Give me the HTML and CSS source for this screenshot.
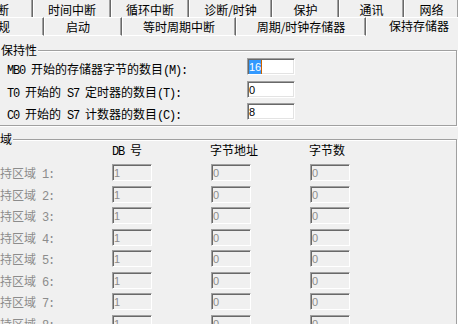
FILE: index.html
```html
<!DOCTYPE html>
<html lang="zh-CN">
<head>
<meta charset="utf-8">
<title>属性 - CPU</title>
<link rel="stylesheet" href="styles.css">
</head>
<body>
<div class="win">
  <div class="tabs">
    <div class="tabrow r1">
      <div class="tab t0">中断</div>
      <div class="tab t1">时间中断</div>
      <div class="tab t2">循环中断</div>
      <div class="tab t3">诊断/时钟</div>
      <div class="tab t4">保护</div>
      <div class="tab t5">通讯</div>
      <div class="tab t6">网络</div>
    </div>
    <div class="tabrow r2">
      <div class="tab u0">常规</div>
      <div class="tab u1">启动</div>
      <div class="tab u2">等时周期中断</div>
      <div class="tab u3">周期/时钟存储器</div>
      <div class="tab u4 active">保持存储器</div>
    </div>
  </div>
  <div class="panel">
    <div class="group g1">
      <div class="gtitle">保持性</div>
      <div class="form1">
        <div class="lbl"><span class="en">MB0 </span>开始的存储器字节的数目<span class="en">(M):</span></div>
        <div class="field"><span class="sel">16</span><span class="caret"></span></div>
        <div class="lbl"><span class="en">T0 </span>开始的<span class="en"> S7 </span>定时器的数目<span class="en">(T):</span></div>
        <div class="field">0</div>
        <div class="lbl"><span class="en">C0 </span>开始的<span class="en"> S7 </span>计数器的数目<span class="en">(C):</span></div>
        <div class="field">8</div>
      </div>
    </div>
    <div class="group g2">
      <div class="gtitle">保持区域</div>
      <div class="colhead">
        <div></div>
        <div><span class="en">DB </span>号</div>
        <div class="ch">字节地址</div>
        <div class="ch">字节数</div>
      </div>
      <div class="form2">
        <div class="lbl">保持区域<span class="en"> 1:</span></div>
        <div class="field">1</div><div class="field">0</div><div class="field">0</div>
        <div class="lbl">保持区域<span class="en"> 2:</span></div>
        <div class="field">1</div><div class="field">0</div><div class="field">0</div>
        <div class="lbl">保持区域<span class="en"> 3:</span></div>
        <div class="field">1</div><div class="field">0</div><div class="field">0</div>
        <div class="lbl">保持区域<span class="en"> 4:</span></div>
        <div class="field">1</div><div class="field">0</div><div class="field">0</div>
        <div class="lbl">保持区域<span class="en"> 5:</span></div>
        <div class="field">1</div><div class="field">0</div><div class="field">0</div>
        <div class="lbl">保持区域<span class="en"> 6:</span></div>
        <div class="field">1</div><div class="field">0</div><div class="field">0</div>
        <div class="lbl">保持区域<span class="en"> 7:</span></div>
        <div class="field">1</div><div class="field">0</div><div class="field">0</div>
        <div class="lbl">保持区域<span class="en"> 8:</span></div>
        <div class="field">1</div><div class="field">0</div><div class="field">0</div>
      </div>
    </div>
  </div>
</div>
</body>
</html>
```
FILE: styles.css
```css
* { box-sizing: border-box; }
html, body { margin: 0; padding: 0; }
body {
  background: #f0f0f0;
  color: #000;
  font-family: "Noto Sans CJK SC", "Noto Sans", sans-serif;
  font-size: 12px;
  line-height: 12px;
}
.win {
  width: 458px;
  height: 324px;
  overflow: hidden;
  background: #f0f0f0;
}
.tabrow {
  display: flex;
  white-space: nowrap;
}
.tab {
  flex: none;
  text-align: center;
  border-left: 1px solid #fff;
  border-right: 1px solid #696969;
  box-shadow: inset -1px 0 0 #a0a0a0;
}
.r1 { height: 17px; }
.r1 .tab {
  height: 17px;
  padding-top: 4px;
  line-height: 12px;
}
.r2 { height: 19px; }
.r2 .tab {
  height: 19px;
  padding-top: 2px;
  line-height: 14px;
  border-top: 1px solid #fff;
  border-bottom: 1px solid #fff;
}
.r2 .tab.active {
  padding-top: 1px;
  line-height: 13px;
  border-bottom: 0;
  background: #f0f0f0;
}
.t0 { width: 72px; margin-left: -39px; }
.t1 { width: 78px; }
.t2 { width: 78px; }
.t3 { width: 83px; }
.t4 { width: 67px; }
.t5 { width: 65px; }
.t6 { width: 55px; }
.u0 { width: 92px; margin-left: -48px; }
.u1 { width: 78px; padding-right: 10px; }
.u2 { width: 114px; }
.u3 { width: 130px; }
.u4 { width: 106px; }

.group {
  border: 1px solid #a0a0a0;
  box-shadow: inset 1px 1px 0 #fff, 1px 1px 0 #fff;
}
.gtitle {
  display: table;
  margin-top: -7px;
  padding: 0 1px;
  background: #f0f0f0;
  line-height: 12px;
}
.g1 {
  margin: 14px 1px 0 -8px;
  padding: 0 0 5px 14px;
}
.g1 .gtitle { margin-left: -7px; }
.g2 {
  margin: 13px 1px 0 -45px;
  padding: 0 0 40px 32px;
}
.g2 .gtitle { margin-left: -25px; }

.en {
  font-family: "Liberation Mono", monospace;
  letter-spacing: -1.2px;
}
.form1 {
  display: grid;
  grid-template-columns: 240px 48px;
  grid-auto-rows: 17px;
  row-gap: 5.5px;
  margin-top: 2px;
}
.lbl {
  white-space: nowrap;
  padding-top: 5px;
}
.field {
  height: 17px;
  border: 1px solid;
  border-color: #a0a0a0 #fff #fff #a0a0a0;
  box-shadow: inset 1px 1px 0 #696969, inset -1px -1px 0 #e3e3e3;
  background: #fff;
  padding: 1px 0 0 1px;
  font-family: "Liberation Sans", Arial, sans-serif;
  font-size: 11px;
  line-height: 14px;
  white-space: nowrap;
  overflow: hidden;
}
.form1 .field { width: 48px; }
.sel {
  display: inline-block;
  vertical-align: top;
  background: #3399ff;
  color: #fff;
  line-height: 14px;
}
.caret {
  display: inline-block;
  vertical-align: top;
  width: 1px;
  height: 14px;
  background: #c86400;
}
.colhead {
  display: grid;
  grid-template-columns: 124px 99px 99px 41px;
  margin-top: -1px;
  line-height: 12px;
  white-space: nowrap;
}
.colhead .ch { margin-left: -1px; }
.form2 {
  display: grid;
  grid-template-columns: 124px 99px 99px 41px;
  grid-auto-rows: 17px;
  row-gap: 4.5px;
  margin-top: 6px;
}
.form2 .lbl {
  padding-top: 3px;
  color: #8c8c8c;
}
.form2 .field {
  width: 40px;
  background: #f0f0f0;
  color: #8c8c8c;
  box-shadow: inset 1px 1px 0 #696969, inset -1px -1px 0 #f0f0f0;
}
```
